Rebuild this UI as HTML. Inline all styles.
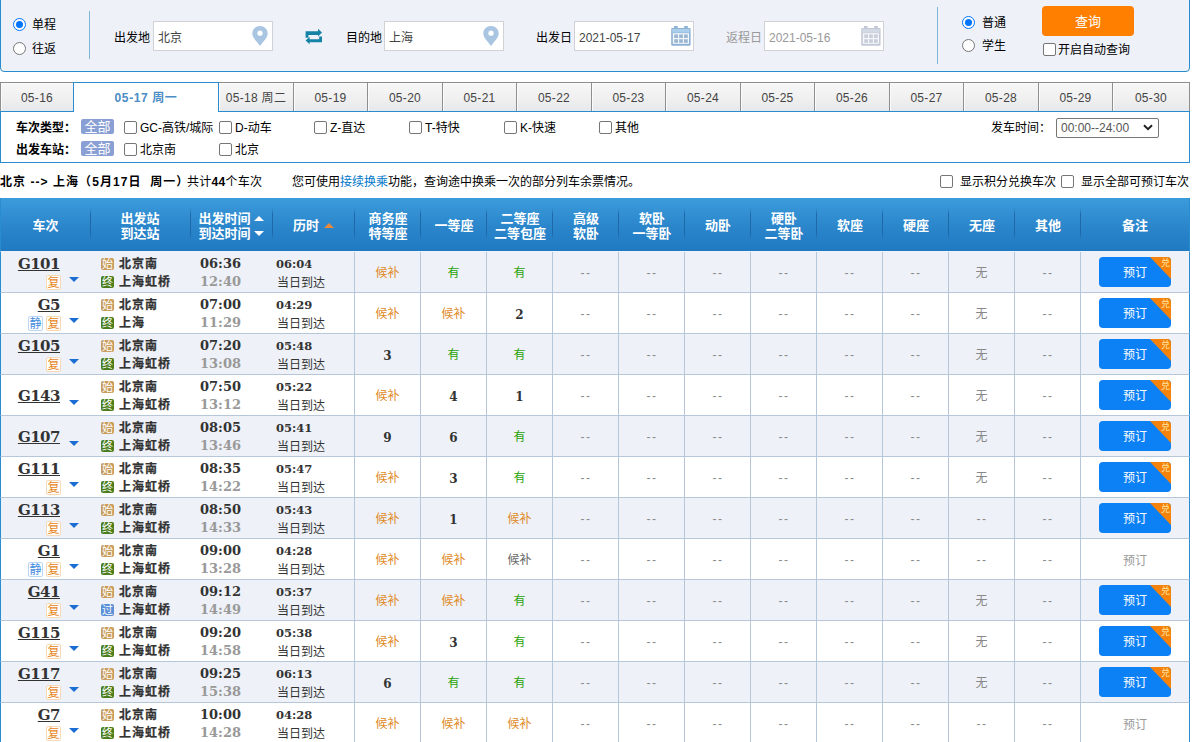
<!DOCTYPE html>
<html lang="zh-CN">
<head>
<meta charset="utf-8">
<title>车票预订</title>
<style>
*{box-sizing:border-box;margin:0;padding:0}
html,body{width:1193px;height:742px;overflow:hidden;background:#fff}
body{font-family:"Liberation Sans","Noto Sans CJK SC",sans-serif;font-size:12px;color:#000;position:relative}
i,em{font-style:normal}
a{text-decoration:none;color:inherit}
.abs{position:absolute}
/* top search panel */
#panel{position:absolute;left:0;top:-2px;width:1190px;height:74px;background:#eef1f8;border:1px solid #298cce;border-radius:0 0 4px 4px}
.lbl{position:absolute;font-size:12px;line-height:14px;white-space:nowrap;color:#000}
.radio{position:absolute;width:13px;height:13px;border-radius:50%;border:1px solid #767676;background:#fff}
.radio.on{border-color:#0075ff}
.radio.on:after{content:"";position:absolute;left:2px;top:2px;width:7px;height:7px;border-radius:50%;background:#0075ff}
.vline{position:absolute;width:1px;background:#7fb4d8}
.inp{position:absolute;height:30px;width:120px;background:#fff;border:1px solid #d0d2d6;font-size:12px;line-height:32px;padding-left:4px;color:#444}
.inp.dis{color:#999}
.cb{position:absolute;width:13px;height:13px;border:1px solid #767676;border-radius:2px;background:#fff}
#qbtn{position:absolute;left:1041px;top:7px;width:92px;height:30px;border-radius:4px;background:#ff8000;color:#fff;font-size:13px;line-height:32px;text-align:center}
/* tabs */
#tabs{position:absolute;left:0;top:82px;width:1190px;height:30px;border-bottom:1px solid #298cce}
.tab{position:absolute;top:0;height:29px;border:1px solid #8f8f8f;border-top-color:#8c8c8c;border-bottom:none;border-left:none;background:linear-gradient(#f7f7f7,#f0f0f0 55%,#e7e8ec);box-shadow:inset 1px 1px 0 #fbfbfb;font-size:12px;line-height:31px;text-align:center;color:#444;letter-spacing:.3px}
.tab.act{height:30px;background:#fff;box-shadow:none;border:1px solid #298cce;border-bottom:none;color:#4a8cc5;font-weight:bold;letter-spacing:.6px;z-index:2}
/* filter */
#filter{position:absolute;left:0;top:112px;width:1190px;height:51px;border:1px solid #298cce;border-top:none;background:#fff}
.all{position:absolute;left:81px;width:33px;height:15px;background:#8a9fd3;color:#fff;border-radius:2px;font-size:13px;line-height:15px;text-align:center}
.sel{position:absolute;left:1056px;top:118px;width:103px;height:20px;border:1px solid #767676;border-radius:2px;background:#fff;font-size:12px;line-height:18px;padding-left:4px;color:#555}
/* info */
#info{position:absolute;left:0;top:175px;height:14px;line-height:14px;font-size:12px;white-space:nowrap}
/* table */
#tbl{position:absolute;left:0;top:198px;width:1190px;border-collapse:separate;border-spacing:0;table-layout:fixed}
#tbl th{height:54px;border-bottom:1px solid #eef1f8;color:#fff;font-weight:bold;font-size:13px;line-height:15px;text-align:center;vertical-align:middle;position:relative;padding:2px 0 0 0;background:linear-gradient(#3b9cdb,#2b85cb 55%,#1f7ac2)}
#tbl th:before{content:"";position:absolute;left:0;top:10px;height:32px;width:1px;background:linear-gradient(rgba(31,105,168,0),#1f69a8 20%,#1f69a8 80%,rgba(31,105,168,0))}
#tbl th:nth-child(n+5):before{left:-1px}
#tbl th:first-child:before{display:none}
#tbl th:first-child{border-left:1px solid #298cce}
#tbl th:last-child{border-right:1px solid #298cce}
#tbl td{height:41px;border-bottom:1px solid #b7c7da;border-right:1px solid #b7c7da;text-align:center;vertical-align:middle;font-size:12px;padding:0;position:relative}
#tbl td.c1,#tbl td.c2,#tbl td.c3{border-right:none}
#tbl td.c1{border-left:1px solid #298cce}
#tbl td.c16{border-right:1px solid #298cce}
tr.odd td{background:#eef1f8}
tr.even td{background:#fff}
td.hb,td.hbg,td.yes{padding-bottom:2px!important}
.hb{color:#e08a1f}
.hbg{color:#666}
.yes{color:#26a306}
td.no{color:#888;font-size:14px;line-height:14px;padding-top:1px!important}
td.na{color:#8a8a8a;letter-spacing:1.5px;padding:1px 0 0 1px!important}
td.num{font-family:"DejaVu Serif",serif;font-weight:bold;color:#333;font-size:12.5px;padding-top:3px!important}
.train{position:relative;width:89px;height:40px}
.train .no{position:absolute;right:30px;top:1px;letter-spacing:-.5px;font-family:"DejaVu Serif",serif;font-weight:bold;font-size:15px;line-height:22px;color:#333;text-decoration:underline}
.train.notag .no{top:10px}
.tags{position:absolute;right:29px;top:23px;height:15px;white-space:nowrap;font-size:0}
.tg{display:inline-block;width:15px;height:15px;border:1px solid #f8d9b5;border-radius:2px;background:#fff;color:#e8861d;font-size:12px;line-height:15px;text-align:center;margin-left:3px;vertical-align:top}
.tg.jing{border-color:#b9d6f5;color:#3e8be0}
.arr{position:absolute;left:68px;top:25px;width:0;height:0;border-left:5px solid transparent;border-right:5px solid transparent;border-top:5px solid #1a6dd2}
.cell{position:relative;height:40px;text-align:left}
.cell>*{position:absolute;white-space:nowrap}
.ic{width:13px;height:12px;border-radius:2px;color:#fff;font-size:11px;line-height:12px;text-align:center;left:11px}
.ic.s{background:#c89c5c}
.ic.z{background:#4b7d1c}
.ic.g{background:#5b8fd6}
.i1{top:6px}.i2{top:24px}
.cell strong{font-size:12px;letter-spacing:1px;-webkit-text-stroke:.25px #333;line-height:18px;color:#333;left:29px}
.s1{top:3px}.s2{top:21px}
.t1,.t2,.d1{font-family:"DejaVu Serif",serif;font-weight:bold}
.t1{font-size:13px;line-height:18px;color:#333;left:10px;top:3px}
.t2{font-size:13px;line-height:18px;color:#999;left:10px;top:21px}
.d1{font-size:11.5px;line-height:18px;color:#333;left:4px;top:3px}
.d2{font-size:12px;line-height:18px;color:#333;left:5px;top:22px}
.btn{display:block;position:relative;width:72px;height:30px;margin:0 0 0 18px;background:#0c80f5;border-radius:4px;color:#fff;font-size:12px;line-height:32px;text-align:center;overflow:hidden}
.btn .tri{position:absolute;right:0;top:0;width:0;height:0;border-top:22px solid #f5820a;border-left:21px solid transparent}
.btn em{position:absolute;right:1px;top:1px;font-size:9px;line-height:10px;color:#ffe9a8}
.nobtn{color:#999;display:block;width:72px;margin-left:18px;text-align:center}
.up,.dn,.up2{display:inline-block;width:0;height:0;border-left:5px solid transparent;border-right:5px solid transparent;margin-left:3px;vertical-align:middle;position:relative}
.up{border-bottom:5px solid #fff;top:-1px}
.dn{border-top:5px solid #fff;top:-1px}
.up2{border-bottom:5px solid #e8883a;margin-left:5px;top:-1px}
</style>
</head>
<body>
<div id="panel">
  <span class="radio on" style="left:12px;top:19px"></span><span class="lbl" style="left:31px;top:19px">单程</span>
  <span class="radio" style="left:12px;top:43px"></span><span class="lbl" style="left:31px;top:43px">往返</span>
  <span class="vline" style="left:88px;top:12px;height:48px"></span>
  <span class="lbl" style="left:113px;top:32px">出发地</span>
  <div class="inp" style="left:152px;top:22px">北京
    <svg class="abs" style="left:98px;top:4px" width="16" height="20" viewBox="0 0 16 20"><path d="M8 0C3.600 0 0.300 3.300 0.300 7.400c0 4.300 4.700 8 7.700 12.600 3-4.600 7.700-8.300 7.700-12.600C15.700 3.300 12.400 0 8 0z" fill="#a9c5e2"/><circle cx="8" cy="7.200" r="2.600" fill="#fff"/></svg>
  </div>
  <svg class="abs" style="left:304px;top:30px" width="17" height="16" viewBox="0 0 17 16"><g fill="#1483a6"><path d="M0.600 2.300H13V-0.200L17 3.600 13 7.400V6H3.400v2.700H0.600z"/><path d="M17 13.200H4.600V15.200L0.600 11.500 4.600 7.800V10.200H14.200V7.400H17z"/></g></svg>
  <span class="lbl" style="left:345px;top:32px">目的地</span>
  <div class="inp" style="left:383px;top:22px">上海
    <svg class="abs" style="left:98px;top:4px" width="16" height="20" viewBox="0 0 16 20"><path d="M8 0C3.600 0 0.300 3.300 0.300 7.400c0 4.300 4.700 8 7.700 12.600 3-4.600 7.700-8.300 7.700-12.600C15.700 3.300 12.400 0 8 0z" fill="#a9c5e2"/><circle cx="8" cy="7.200" r="2.600" fill="#fff"/></svg>
  </div>
  <span class="lbl" style="left:535px;top:32px">出发日</span>
  <div class="inp" style="left:573px;top:22px">2021-05-17
    <svg class="abs" style="left:96px;top:4px" width="20" height="20" viewBox="0 0 20 20"><rect x="3" y="0" width="3.600" height="4" fill="#8fb1d3"/><rect x="13.200" y="0" width="3.600" height="4" fill="#8fb1d3"/><rect x="0.200" y="2" width="19.400" height="17.700" rx="1" fill="#8fb1d3"/><rect x="1.200" y="3" width="17.400" height="3.600" fill="#a9cfec"/><rect x="1.800" y="7.200" width="16.200" height="10.600" fill="#f4f9fd"/><g fill="#9db7d3"><rect x="3.200" y="8.400" width="3.800" height="3.600"/><rect x="8.100" y="8.400" width="3.800" height="3.600"/><rect x="13" y="8.400" width="3.800" height="3.600"/><rect x="3.200" y="13.200" width="3.800" height="3.600"/><rect x="8.100" y="13.200" width="3.800" height="3.600"/><rect x="13" y="13.200" width="3.800" height="3.600"/></g></svg>
  </div>
  <span class="lbl" style="left:725px;top:32px;color:#999">返程日</span>
  <div class="inp dis" style="left:763px;top:22px">2021-05-16
    <svg class="abs" style="left:96px;top:4px" width="20" height="20" viewBox="0 0 20 20"><rect x="3" y="0" width="3.600" height="4" fill="#c3c9d6"/><rect x="13.200" y="0" width="3.600" height="4" fill="#c3c9d6"/><rect x="0.200" y="2" width="19.400" height="17.700" rx="1" fill="#c3c9d6"/><rect x="1.200" y="3" width="17.400" height="3.600" fill="#d3d9e4"/><rect x="1.800" y="7.200" width="16.200" height="10.600" fill="#f6f7fa"/><g fill="#c9ceda"><rect x="3.200" y="8.400" width="3.800" height="3.600"/><rect x="8.100" y="8.400" width="3.800" height="3.600"/><rect x="13" y="8.400" width="3.800" height="3.600"/><rect x="3.200" y="13.200" width="3.800" height="3.600"/><rect x="8.100" y="13.200" width="3.800" height="3.600"/><rect x="13" y="13.200" width="3.800" height="3.600"/></g></svg>
  </div>
  <span class="vline" style="left:936px;top:8px;height:57px"></span>
  <span class="radio on" style="left:961px;top:17px"></span><span class="lbl" style="left:981px;top:17px">普通</span>
  <span class="radio" style="left:961px;top:40px"></span><span class="lbl" style="left:981px;top:40px">学生</span>
  <a id="qbtn">查询</a>
  <span class="cb" style="left:1042px;top:44px"></span><span class="lbl" style="left:1057px;top:44px">开启自动查询</span>
</div>

<div id="tabs">
  <div class="tab" style="left:0;width:74px;border-left:1px solid #8f8f8f">05-16</div>
  <div class="tab act" style="left:73px;width:146px">05-17 周一</div>
  <div class="tab" style="left:219px;width:75px">05-18 周二</div>
  <div class="tab" style="left:294px;width:74px">05-19</div>
  <div class="tab" style="left:368px;width:75px">05-20</div>
  <div class="tab" style="left:443px;width:74px">05-21</div>
  <div class="tab" style="left:517px;width:75px">05-22</div>
  <div class="tab" style="left:592px;width:74px">05-23</div>
  <div class="tab" style="left:666px;width:75px">05-24</div>
  <div class="tab" style="left:741px;width:74px">05-25</div>
  <div class="tab" style="left:815px;width:75px">05-26</div>
  <div class="tab" style="left:890px;width:74px">05-27</div>
  <div class="tab" style="left:964px;width:75px">05-28</div>
  <div class="tab" style="left:1039px;width:74px">05-29</div>
  <div class="tab" style="left:1113px;width:77px">05-30</div>
</div>

<div id="filter"></div>
<span class="lbl" style="left:16px;top:121px;font-weight:bold">车次类型：</span>
<span class="all" style="top:119px">全部</span>
<span class="cb" style="left:124px;top:121px"></span><span class="lbl" style="left:140px;top:121px">GC-高铁/城际</span>
<span class="cb" style="left:219px;top:121px"></span><span class="lbl" style="left:235px;top:121px">D-动车</span>
<span class="cb" style="left:314px;top:121px"></span><span class="lbl" style="left:330px;top:121px">Z-直达</span>
<span class="cb" style="left:409px;top:121px"></span><span class="lbl" style="left:425px;top:121px">T-特快</span>
<span class="cb" style="left:504px;top:121px"></span><span class="lbl" style="left:520px;top:121px">K-快速</span>
<span class="cb" style="left:599px;top:121px"></span><span class="lbl" style="left:615px;top:121px">其他</span>
<span class="lbl" style="left:991px;top:121px">发车时间：</span>
<div class="sel">00:00--24:00<svg class="abs" style="right:5px;top:5px" width="10" height="7" viewBox="0 0 10 7"><path d="M1 1.200l4 4 4-4" fill="none" stroke="#222" stroke-width="2"/></svg></div>
<span class="lbl" style="left:16px;top:143px;font-weight:bold">出发车站：</span>
<span class="all" style="top:141px">全部</span>
<span class="cb" style="left:124px;top:143px"></span><span class="lbl" style="left:140px;top:143px">北京南</span>
<span class="cb" style="left:219px;top:143px"></span><span class="lbl" style="left:235px;top:143px">北京</span>

<div id="info"><strong style="letter-spacing:1.05px">北京 --&gt; 上海（5月17日&nbsp; 周一）</strong></div>
<span class="lbl" style="left:187px;top:175px;letter-spacing:.25px">共计<strong>44</strong>个车次</span>
<span class="lbl" style="left:292px;top:175px">您可使用<a style="color:#0077cc">接续换乘</a>功能，查询途中换乘一次的部分列车余票情况。</span>
<span class="cb" style="left:940px;top:175px"></span><span class="lbl" style="left:960px;top:175px">显示积分兑换车次</span>
<span class="cb" style="left:1061px;top:175px"></span><span class="lbl" style="left:1081px;top:175px">显示全部可预订车次</span>

<table id="tbl">
<colgroup><col style="width:90px"><col style="width:100px"><col style="width:82px"><col style="width:83px"><col style="width:66px"><col style="width:66px"><col style="width:66px"><col style="width:66px"><col style="width:66px"><col style="width:66px"><col style="width:66px"><col style="width:66px"><col style="width:66px"><col style="width:66px"><col style="width:66px"><col style="width:109px"></colgroup>
<thead><tr>
<th>车次</th><th>出发站<br>到达站</th><th>出发时间<span class="up"></span><br>到达时间<span class="dn"></span></th><th>历时<span class="up2"></span></th>
<th>商务座<br>特等座</th><th>一等座</th><th>二等座<br>二等包座</th><th>高级<br>软卧</th><th>软卧<br>一等卧</th><th>动卧</th><th>硬卧<br>二等卧</th><th>软座</th><th>硬座</th><th>无座</th><th>其他</th><th>备注</th>
</tr></thead>
<tbody>
<tr class="odd">
<td class="c1"><div class="train"><a class="no">G101</a><div class="tags"><i class="tg fu">复</i></div><b class="arr"></b></div></td>
<td class="c2"><div class="cell"><i class="ic i1 s">始</i><strong class="s1">北京南</strong><i class="ic i2 z">终</i><strong class="s2">上海虹桥</strong></div></td>
<td class="c3"><div class="cell"><span class="t1">06:36</span><span class="t2">12:40</span></div></td>
<td class="c4"><div class="cell"><span class="d1">06:04</span><span class="d2">当日到达</span></div></td>
<td class="hb">候补</td>
<td class="yes">有</td>
<td class="yes">有</td>
<td class="na">--</td>
<td class="na">--</td>
<td class="na">--</td>
<td class="na">--</td>
<td class="na">--</td>
<td class="na">--</td>
<td class="no">无</td>
<td class="na">--</td>
<td class="c16"><a class="btn">预订<span class="tri"></span><em>兑</em></a></td>
</tr>
<tr class="even">
<td class="c1"><div class="train"><a class="no">G5</a><div class="tags"><i class="tg jing">静</i><i class="tg fu">复</i></div><b class="arr"></b></div></td>
<td class="c2"><div class="cell"><i class="ic i1 s">始</i><strong class="s1">北京南</strong><i class="ic i2 z">终</i><strong class="s2">上海</strong></div></td>
<td class="c3"><div class="cell"><span class="t1">07:00</span><span class="t2">11:29</span></div></td>
<td class="c4"><div class="cell"><span class="d1">04:29</span><span class="d2">当日到达</span></div></td>
<td class="hb">候补</td>
<td class="hb">候补</td>
<td class="num">2</td>
<td class="na">--</td>
<td class="na">--</td>
<td class="na">--</td>
<td class="na">--</td>
<td class="na">--</td>
<td class="na">--</td>
<td class="no">无</td>
<td class="na">--</td>
<td class="c16"><a class="btn">预订<span class="tri"></span><em>兑</em></a></td>
</tr>
<tr class="odd">
<td class="c1"><div class="train"><a class="no">G105</a><div class="tags"><i class="tg fu">复</i></div><b class="arr"></b></div></td>
<td class="c2"><div class="cell"><i class="ic i1 s">始</i><strong class="s1">北京南</strong><i class="ic i2 z">终</i><strong class="s2">上海虹桥</strong></div></td>
<td class="c3"><div class="cell"><span class="t1">07:20</span><span class="t2">13:08</span></div></td>
<td class="c4"><div class="cell"><span class="d1">05:48</span><span class="d2">当日到达</span></div></td>
<td class="num">3</td>
<td class="yes">有</td>
<td class="yes">有</td>
<td class="na">--</td>
<td class="na">--</td>
<td class="na">--</td>
<td class="na">--</td>
<td class="na">--</td>
<td class="na">--</td>
<td class="no">无</td>
<td class="na">--</td>
<td class="c16"><a class="btn">预订<span class="tri"></span><em>兑</em></a></td>
</tr>
<tr class="even">
<td class="c1"><div class="train notag"><a class="no">G143</a><div class="tags"></div><b class="arr"></b></div></td>
<td class="c2"><div class="cell"><i class="ic i1 s">始</i><strong class="s1">北京南</strong><i class="ic i2 z">终</i><strong class="s2">上海虹桥</strong></div></td>
<td class="c3"><div class="cell"><span class="t1">07:50</span><span class="t2">13:12</span></div></td>
<td class="c4"><div class="cell"><span class="d1">05:22</span><span class="d2">当日到达</span></div></td>
<td class="hb">候补</td>
<td class="num">4</td>
<td class="num">1</td>
<td class="na">--</td>
<td class="na">--</td>
<td class="na">--</td>
<td class="na">--</td>
<td class="na">--</td>
<td class="na">--</td>
<td class="no">无</td>
<td class="na">--</td>
<td class="c16"><a class="btn">预订<span class="tri"></span><em>兑</em></a></td>
</tr>
<tr class="odd">
<td class="c1"><div class="train notag"><a class="no">G107</a><div class="tags"></div><b class="arr"></b></div></td>
<td class="c2"><div class="cell"><i class="ic i1 s">始</i><strong class="s1">北京南</strong><i class="ic i2 z">终</i><strong class="s2">上海虹桥</strong></div></td>
<td class="c3"><div class="cell"><span class="t1">08:05</span><span class="t2">13:46</span></div></td>
<td class="c4"><div class="cell"><span class="d1">05:41</span><span class="d2">当日到达</span></div></td>
<td class="num">9</td>
<td class="num">6</td>
<td class="yes">有</td>
<td class="na">--</td>
<td class="na">--</td>
<td class="na">--</td>
<td class="na">--</td>
<td class="na">--</td>
<td class="na">--</td>
<td class="no">无</td>
<td class="na">--</td>
<td class="c16"><a class="btn">预订<span class="tri"></span><em>兑</em></a></td>
</tr>
<tr class="even">
<td class="c1"><div class="train"><a class="no">G111</a><div class="tags"><i class="tg fu">复</i></div><b class="arr"></b></div></td>
<td class="c2"><div class="cell"><i class="ic i1 s">始</i><strong class="s1">北京南</strong><i class="ic i2 z">终</i><strong class="s2">上海虹桥</strong></div></td>
<td class="c3"><div class="cell"><span class="t1">08:35</span><span class="t2">14:22</span></div></td>
<td class="c4"><div class="cell"><span class="d1">05:47</span><span class="d2">当日到达</span></div></td>
<td class="hb">候补</td>
<td class="num">3</td>
<td class="yes">有</td>
<td class="na">--</td>
<td class="na">--</td>
<td class="na">--</td>
<td class="na">--</td>
<td class="na">--</td>
<td class="na">--</td>
<td class="no">无</td>
<td class="na">--</td>
<td class="c16"><a class="btn">预订<span class="tri"></span><em>兑</em></a></td>
</tr>
<tr class="odd">
<td class="c1"><div class="train"><a class="no">G113</a><div class="tags"><i class="tg fu">复</i></div><b class="arr"></b></div></td>
<td class="c2"><div class="cell"><i class="ic i1 s">始</i><strong class="s1">北京南</strong><i class="ic i2 z">终</i><strong class="s2">上海虹桥</strong></div></td>
<td class="c3"><div class="cell"><span class="t1">08:50</span><span class="t2">14:33</span></div></td>
<td class="c4"><div class="cell"><span class="d1">05:43</span><span class="d2">当日到达</span></div></td>
<td class="hb">候补</td>
<td class="num">1</td>
<td class="hb">候补</td>
<td class="na">--</td>
<td class="na">--</td>
<td class="na">--</td>
<td class="na">--</td>
<td class="na">--</td>
<td class="na">--</td>
<td class="na">--</td>
<td class="na">--</td>
<td class="c16"><a class="btn">预订<span class="tri"></span><em>兑</em></a></td>
</tr>
<tr class="even">
<td class="c1"><div class="train"><a class="no">G1</a><div class="tags"><i class="tg jing">静</i><i class="tg fu">复</i></div><b class="arr"></b></div></td>
<td class="c2"><div class="cell"><i class="ic i1 s">始</i><strong class="s1">北京南</strong><i class="ic i2 z">终</i><strong class="s2">上海虹桥</strong></div></td>
<td class="c3"><div class="cell"><span class="t1">09:00</span><span class="t2">13:28</span></div></td>
<td class="c4"><div class="cell"><span class="d1">04:28</span><span class="d2">当日到达</span></div></td>
<td class="hb">候补</td>
<td class="hb">候补</td>
<td class="hbg">候补</td>
<td class="na">--</td>
<td class="na">--</td>
<td class="na">--</td>
<td class="na">--</td>
<td class="na">--</td>
<td class="na">--</td>
<td class="na">--</td>
<td class="na">--</td>
<td class="c16"><span class="nobtn">预订</span></td>
</tr>
<tr class="odd">
<td class="c1"><div class="train"><a class="no">G41</a><div class="tags"><i class="tg fu">复</i></div><b class="arr"></b></div></td>
<td class="c2"><div class="cell"><i class="ic i1 s">始</i><strong class="s1">北京南</strong><i class="ic i2 g">过</i><strong class="s2">上海虹桥</strong></div></td>
<td class="c3"><div class="cell"><span class="t1">09:12</span><span class="t2">14:49</span></div></td>
<td class="c4"><div class="cell"><span class="d1">05:37</span><span class="d2">当日到达</span></div></td>
<td class="hb">候补</td>
<td class="hb">候补</td>
<td class="yes">有</td>
<td class="na">--</td>
<td class="na">--</td>
<td class="na">--</td>
<td class="na">--</td>
<td class="na">--</td>
<td class="na">--</td>
<td class="no">无</td>
<td class="na">--</td>
<td class="c16"><a class="btn">预订<span class="tri"></span><em>兑</em></a></td>
</tr>
<tr class="even">
<td class="c1"><div class="train"><a class="no">G115</a><div class="tags"><i class="tg fu">复</i></div><b class="arr"></b></div></td>
<td class="c2"><div class="cell"><i class="ic i1 s">始</i><strong class="s1">北京南</strong><i class="ic i2 z">终</i><strong class="s2">上海虹桥</strong></div></td>
<td class="c3"><div class="cell"><span class="t1">09:20</span><span class="t2">14:58</span></div></td>
<td class="c4"><div class="cell"><span class="d1">05:38</span><span class="d2">当日到达</span></div></td>
<td class="hb">候补</td>
<td class="num">3</td>
<td class="yes">有</td>
<td class="na">--</td>
<td class="na">--</td>
<td class="na">--</td>
<td class="na">--</td>
<td class="na">--</td>
<td class="na">--</td>
<td class="no">无</td>
<td class="na">--</td>
<td class="c16"><a class="btn">预订<span class="tri"></span><em>兑</em></a></td>
</tr>
<tr class="odd">
<td class="c1"><div class="train"><a class="no">G117</a><div class="tags"><i class="tg fu">复</i></div><b class="arr"></b></div></td>
<td class="c2"><div class="cell"><i class="ic i1 s">始</i><strong class="s1">北京南</strong><i class="ic i2 z">终</i><strong class="s2">上海虹桥</strong></div></td>
<td class="c3"><div class="cell"><span class="t1">09:25</span><span class="t2">15:38</span></div></td>
<td class="c4"><div class="cell"><span class="d1">06:13</span><span class="d2">当日到达</span></div></td>
<td class="num">6</td>
<td class="yes">有</td>
<td class="yes">有</td>
<td class="na">--</td>
<td class="na">--</td>
<td class="na">--</td>
<td class="na">--</td>
<td class="na">--</td>
<td class="na">--</td>
<td class="no">无</td>
<td class="na">--</td>
<td class="c16"><a class="btn">预订<span class="tri"></span><em>兑</em></a></td>
</tr>
<tr class="even">
<td class="c1"><div class="train"><a class="no">G7</a><div class="tags"><i class="tg fu">复</i></div><b class="arr"></b></div></td>
<td class="c2"><div class="cell"><i class="ic i1 s">始</i><strong class="s1">北京南</strong><i class="ic i2 z">终</i><strong class="s2">上海虹桥</strong></div></td>
<td class="c3"><div class="cell"><span class="t1">10:00</span><span class="t2">14:28</span></div></td>
<td class="c4"><div class="cell"><span class="d1">04:28</span><span class="d2">当日到达</span></div></td>
<td class="hb">候补</td>
<td class="hb">候补</td>
<td class="hb">候补</td>
<td class="na">--</td>
<td class="na">--</td>
<td class="na">--</td>
<td class="na">--</td>
<td class="na">--</td>
<td class="na">--</td>
<td class="na">--</td>
<td class="na">--</td>
<td class="c16"><span class="nobtn">预订</span></td>
</tr>
</tbody>
</table>
</body>
</html>
